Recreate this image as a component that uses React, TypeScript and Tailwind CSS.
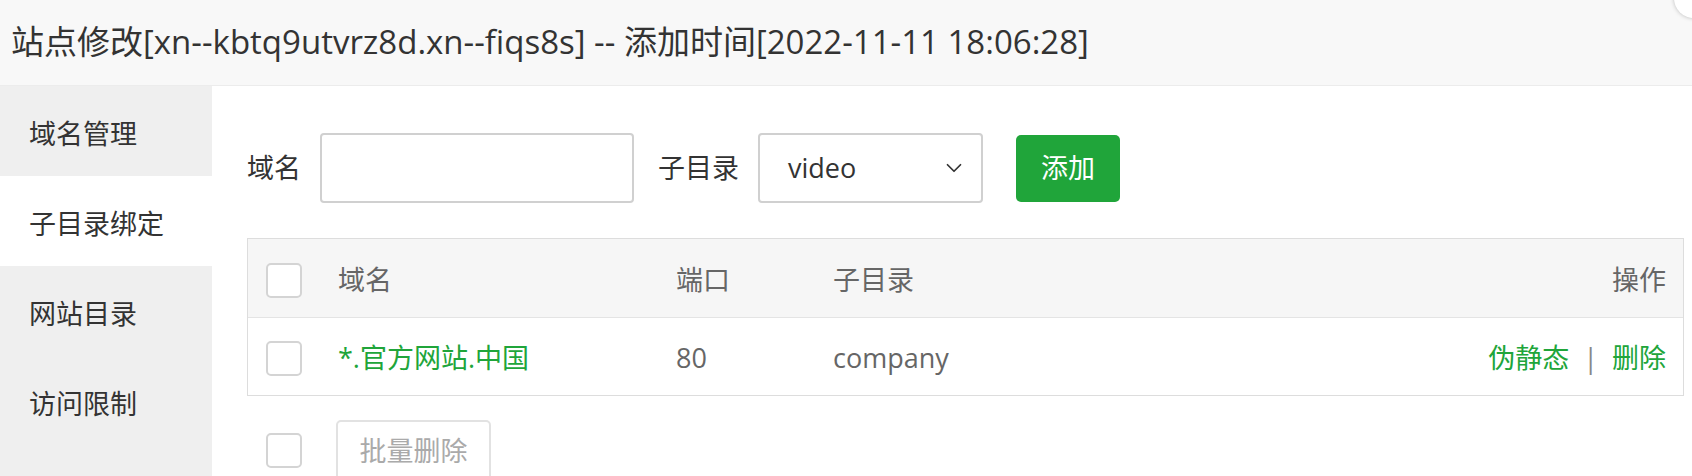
import { ChevronDown } from "lucide-react";

const font = { fontFamily: '"Open Sans", "Noto Sans CJK SC", sans-serif' };

function Checkbox() {
    return <div className="w-[36px] h-[35px] shrink-0 rounded-[5px] border-2 border-[#d4d4d4] bg-white" />;
}

function App() {
    const menu = ["域名管理", "子目录绑定", "网站目录", "访问限制"];
    const active = 1;

    return (
        <div className="w-[1692px] h-[476px] overflow-hidden bg-white relative" style={font}>
            <div className="absolute right-[-22px] top-[-22px] w-[40px] h-[40px] rounded-full bg-white shadow-[0_0_4px_rgba(0,0,0,0.25)]" />
            <div className="h-[86px] bg-[#f8f8f8] border-b border-[#ececec] flex items-center px-[11px] pb-[2px] text-[33px] text-[#333] whitespace-nowrap">
                站点修改[xn--kbtq9utvrz8d.xn--fiqs8s] -- 添加时间[2022-11-11 18:06:28]
            </div>
            <div className="flex h-[390px]">
                <div className="w-[212px] shrink-0 bg-[#efefef]">
                    {menu.map((m, i) => (
                        <div
                            key={m}
                            className={
                                i === active
                                    ? "h-[90px] flex items-center pl-[29px] pt-[6px] text-[27px] text-[#333] bg-white"
                                    : "h-[90px] flex items-center pl-[29px] pt-[6px] text-[27px] text-[#333]"
                            }
                        >
                            {m}
                        </div>
                    ))}
                </div>
                <div className="flex-1 pl-[35px] pr-[8px] pt-[47px] text-[27px]">
                    <div className="flex items-center h-[70px]">
                        <span className="text-[#333] w-[73px]">域名</span>
                        <div className="w-[314px] h-[70px] rounded-[4px] border-2 border-[#d0d0d0] bg-white" />
                        <span className="text-[#333] ml-[24px] w-[100px]">子目录</span>
                        <div className="w-[225px] h-[70px] rounded-[4px] border-2 border-[#d0d0d0] bg-white flex items-center justify-between pl-[28px] pr-[14px] text-[#333]">
                            <span>video</span>
                            <ChevronDown size={26} strokeWidth={1.6} className="text-[#333]" />
                        </div>
                        <button className="ml-[33px] w-[104px] h-[67px] rounded-[5px] bg-[#20a53a] text-white text-[27px]">添加</button>
                    </div>

                    <div className="mt-[35px] border border-[#ddd]">
                        <div className="h-[79px] bg-[#f6f6f6] border-b border-[#e4e4e4] flex items-center pt-[4px] pl-[18px] pr-[17px] text-[#666]">
                            <Checkbox />
                            <span className="ml-[36px] w-[338px]">域名</span>
                            <span className="w-[157px]">端口</span>
                            <span className="flex-1">子目录</span>
                            <span>操作</span>
                        </div>
                        <div className="h-[77px] flex items-center pt-[4px] pl-[18px] pr-[17px] text-[#666]">
                            <Checkbox />
                            <span className="ml-[36px] w-[338px] text-[#20a53a]">*.官方网站.中国</span>
                            <span className="w-[157px]">80</span>
                            <span className="flex-1">company</span>
                            <span className="text-[#20a53a]">伪静态</span>
                            <span className="mx-[14px] text-[#888]">|</span>
                            <span className="text-[#20a53a]">删除</span>
                        </div>
                    </div>

                    <div className="mt-[24px] flex items-start pl-[19px]">
                        <div className="mt-[13px]">
                            <Checkbox />
                        </div>
                        <button className="ml-[34px] w-[155px] h-[62px] rounded-[5px] border-2 border-[#e2e2e2] bg-white text-[#aaa] text-[27px]">批量删除</button>
                    </div>
                </div>
            </div>
        </div>
    );
}
export default App;
